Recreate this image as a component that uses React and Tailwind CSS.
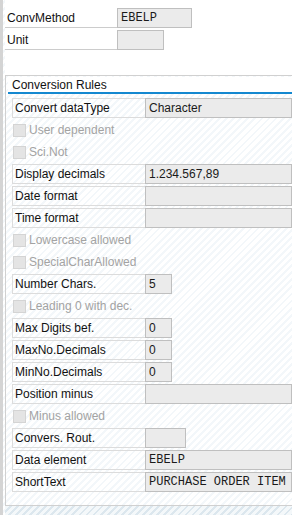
const rows = [
  { type: "field", label: "Convert dataType", value: "Character", w: "flex-1" },
  { type: "check", label: "User dependent" },
  { type: "check", label: "Sci.Not" },
  { type: "field", label: "Display decimals", value: "1.234.567,89", w: "flex-1" },
  { type: "field", label: "Date format", value: "", w: "flex-1" },
  { type: "field", label: "Time format", value: "", w: "flex-1" },
  { type: "check", label: "Lowercase allowed" },
  { type: "check", label: "SpecialCharAllowed" },
  { type: "field", label: "Number Chars.", value: "5", w: "w-[27px]" },
  { type: "check", label: "Leading 0 with dec." },
  { type: "field", label: "Max Digits bef.", value: "0", w: "w-[27px]" },
  { type: "field", label: "MaxNo.Decimals", value: "0", w: "w-[27px]" },
  { type: "field", label: "MinNo.Decimals", value: "0", w: "w-[27px]" },
  { type: "field", label: "Position minus", value: "", w: "flex-1" },
  { type: "check", label: "Minus allowed" },
  { type: "field", label: "Convers. Rout.", value: "", w: "w-[41px]" },
  { type: "field", label: "Data element", value: "EBELP", w: "flex-1", mono: true },
  { type: "field", label: "ShortText", value: "PURCHASE ORDER ITEM", w: "flex-1", mono: true },
];

function Input({ value, w, mono }) {
  return (
    <div
      className={`${w} h-[20px] flex items-center px-[3px] bg-[#ebebeb] border border-[#bfbfbf] text-[#1a1a1a] whitespace-nowrap overflow-hidden ${
        mono ? "font-['Liberation_Mono',monospace] text-[12px]" : "text-[12px]"
      }`}
    >
      {value}
    </div>
  );
}

function Row({ row }) {
  if (row.type === "check") {
    return (
      <div className="h-[20px] mb-[2px] flex items-center pl-[1px]">
        <span className="w-[13px] h-[13px] bg-[#e4e4e4] border border-[#d4d4d4]" />
        <span className="ml-[3px] text-[12px] text-[#a3a3a3]">{row.label}</span>
      </div>
    );
  }
  return (
    <div className="h-[20px] mb-[2px] flex">
      <div className="w-[133px] shrink-0 h-[20px] flex items-center pl-[2px] border border-r-0 border-[#dcdcdc] text-[12px] text-[#111]">
        {row.label}
      </div>
      <Input value={row.value} w={row.w} mono={row.mono} />
    </div>
  );
}

export default function App() {
  return (
    <div className="w-[292px] h-[515px] overflow-hidden flex font-['Liberation_Sans',Arial,sans-serif] bg-[repeating-linear-gradient(135deg,#ffffff_0px,#ffffff_3px,#f3f7fa_3px,#f3f7fa_5px)]">
      <div className="w-[3px] shrink-0 bg-[#d4d4d4]" />
      <div className="flex-1 flex flex-col pl-[2px]">
        <div className="pt-[8px] bg-white pb-[25px]">
          <div className="h-[20px] flex mb-[2px]">
            <div className="w-[112px] shrink-0 flex items-center pl-[2px] border-b border-[#cccccc] text-[12px] text-[#111]">
              ConvMethod
            </div>
            <Input value="EBELP" w="w-[75px]" mono />
          </div>
          <div className="h-[20px] flex">
            <div className="w-[112px] shrink-0 flex items-center pl-[2px] border-b border-[#cccccc] text-[12px] text-[#111]">
              Unit
            </div>
            <Input value="" w="w-[47px]" />
          </div>
        </div>
        <div className="h-[431px] border-l border-t border-b border-[#d0d0d0] flex flex-col">
          <div className="pl-[2px] pt-[1px]">
            <div className="h-[15px] bg-white flex items-center pl-[4px] text-[12px] text-[#111]">
              Conversion Rules
            </div>
            <div className="h-[2px] bg-[#1488d0]" />
          </div>
          <div className="pl-[6px] pt-[4px]">
            {rows.map((r) => (
              <Row key={r.label} row={r} />
            ))}
          </div>
        </div>
        <div className="flex-1 bg-[repeating-linear-gradient(135deg,#f4f8fa_0px,#f4f8fa_3px,#dce7ee_3px,#dce7ee_5px)]" />
      </div>
    </div>
  );
}
